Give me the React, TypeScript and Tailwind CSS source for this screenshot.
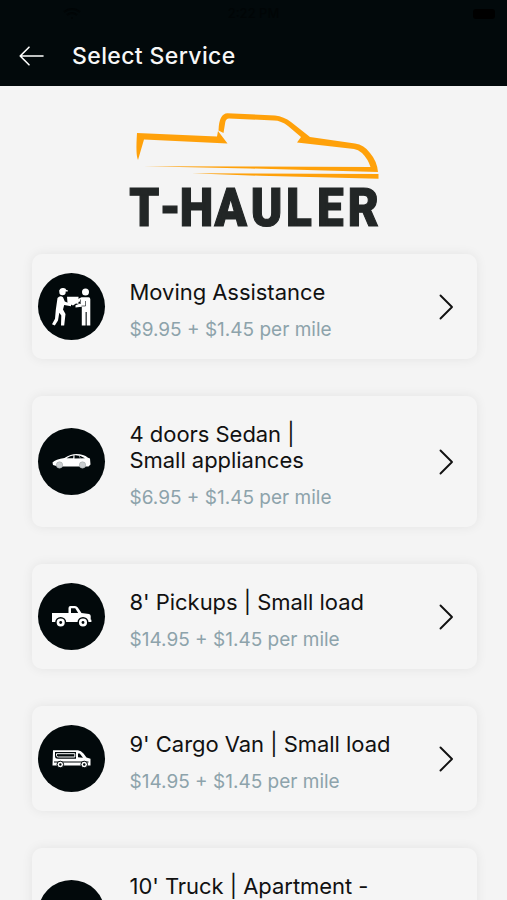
import type { ReactNode } from 'react';

type Service = {
  title: string[];
  price: string;
  icon?: ReactNode;
};

const SERVICES: Service[] = [
  { title: ['Moving Assistance'], price: '$9.95 + $1.45 per mile', icon: <MoversIcon /> },
  { title: ['4 doors Sedan |', 'Small appliances'], price: '$6.95 + $1.45 per mile', icon: <SedanIcon /> },
  { title: ["8' Pickups | Small load"], price: '$14.95 + $1.45 per mile', icon: <PickupIcon /> },
  { title: ["9' Cargo Van | Small load"], price: '$14.95 + $1.45 per mile', icon: <VanIcon /> },
  { title: ["10' Truck | Apartment -", '\u00a0'], price: '' },
];

export default function App() {
  return (
    <div className="h-[900px] w-[507px] overflow-hidden bg-[#f4f4f4] font-['Inter',sans-serif] flex flex-col">
      <Header />
      <main className="flex flex-1 flex-col overflow-hidden">
        <Logo />
        <ul className="ml-8 flex w-[445px] flex-col gap-[37px]">
          {SERVICES.map((s) => (
            <ServiceCard key={s.title[0]} service={s} />
          ))}
        </ul>
      </main>
    </div>
  );
}

function Header() {
  return (
    <header className="h-[86px] shrink-0 bg-[#02090b]">
      {/* status bar: black on near black */}
      <div className="flex h-[27px] items-center justify-between px-3 text-[13px] text-[#010506]">
        <svg width="80" height="14" viewBox="0 0 80 14" fill="none" stroke="currentColor" strokeWidth="2">
          <path d="M52 5q8-6 16 0M55 8q5-4 10 0M59 11h2" />
        </svg>
        <span className="font-medium">2:22 PM</span>
        <div className="flex w-20 justify-end">
          <div className="h-[10px] w-[22px] rounded-[3px] bg-black" />
        </div>
      </div>
      <div className="flex h-[58px] items-center pl-[19px]">
        <svg width="26" height="20" viewBox="0 0 26 20" fill="none" stroke="#fff" strokeWidth="1.6" strokeLinecap="round" strokeLinejoin="round">
          <path d="M24 10H1.2M10 1.2 1.2 10l8.800 8.800" />
        </svg>
        <h1 className="ml-[27px] text-[23px] font-medium tracking-[0.38px] text-[#f7f7f7]">Select Service</h1>
      </div>
    </header>
  );
}

function Logo() {
  return (
    <svg className="ml-[120px] mt-[14px] mb-[14px] shrink-0" width="270" height="140" viewBox="0 0 270 140">
      <g fill="#ffa10a">
        <path d="M17 33 97 36.5 98 31 107.5 43.5 24 39.5 18 60Q15.5 55 17 33Z" />
        <path d="M98.5 30.5Q99 13.5 107.5 13.3L155 15.5Q164 16.5 171 22L190 37 235 43.5Q244 44.5 250 53 257 61 258 72L130 68.5 24 66.3 130 66.5 250.500 67Q248 59 242 53 238 49.500 234 49L177 42.500 181 37 168 26Q161 20.500 154 20.500L109 18.500Q106 18.500 105.300 22L103.500 33Z" />
        <path d="M72 73.300 258.500 74V78.700L140 75.800Z" />
      </g>
      {/* narrow glyphs with wide gaps, one x per letter */}
      <text
        transform="scale(0.89 1)"
        x="10.300 44.500 67 106.300 147 186.500 221.500 256"
        y="126.500"
        fill="#222626"
        stroke="#222626"
        strokeWidth="1.200"
        fontFamily="Roboto, sans-serif"
        fontWeight="900"
        fontSize="53.500"
      >
        T-HAULER
      </text>
    </svg>
  );
}

function ServiceCard({ service }: { service: Service }) {
  return (
    <li className="flex items-center rounded-[10px] bg-[#f5f5f5] pt-[25px] pb-[18px] pl-1.5 shadow-[0_0_12px_rgba(0,0,0,0.07)]">
      <div className="-mt-[7px] h-[67px] w-[67px] shrink-0 rounded-full bg-[#02090b]">{service.icon}</div>
      <div className="ml-[24.500px] flex-1">
        <h2 className="text-[22px] leading-[26px] tracking-[-0.04px] text-[#111]">
          {service.title.map((line) => (
            <span key={line} className="block whitespace-nowrap">{line}</span>
          ))}
        </h2>
        <p className="mt-[13px] h-[23px] text-[19px] leading-[23px] text-[#8da3ab]">{service.price}</p>
      </div>
      <svg className="-mt-[7px] mr-[23.500px]" width="16" height="26" viewBox="0 0 16 26" fill="none" stroke="#111" strokeWidth="1.900" strokeLinecap="round" strokeLinejoin="round">
        <path d="M2.500 1.500 14 13 2.500 24.500" />
      </svg>
    </li>
  );
}

function MoversIcon() {
  return (
    <svg width="67" height="67" viewBox="0 0 67 67" fill="#fff">
      <circle cx="24.500" cy="19" r="3.200" />
      <path d="M21.300 18q.5-3.200 4-3 2.500.2 3 2l1.500.3v1.200h-8.500z" />
      <path d="M19.500 25q2.500-2.800 5.500-.8l1.800 4.300 6.200 2.500v2.200l-6.800-1.200-1.200 4.500 2.500 4.500-1.300 11.500h-3.200l.3-10-2-2.800-1.300 7.800-3.200 5-2.800-1.200 3-5.500.8-9Z" />
      <path d="M29 23.700h11.500v7.300l-2.500-.5-3 2-5.500-2.500z" />
      <circle cx="47.500" cy="19" r="3.500" />
      <path d="M43.500 24.200h7.200q1.600 0 1.600 2V52.500h-3.600V39h-1.100v13.500h-3.800V33.800l-6.300.6v-2.200l4.500-1.800v-2l-3 .8v-2.800z" />
      <path d="M42.500 26.500v4.500M47.500 28v5h-4" fill="none" stroke="#02090b" strokeWidth=".6" />
    </svg>
  );
}

function SedanIcon() {
  return (
    <svg width="67" height="67" viewBox="0 0 67 67">
      <path fill="#fff" d="M14.500 34.500q3-3.500 12-4.500 6-4 12-4 7 0 11.500 3.700l2 .8.500 6-2 1.900H20l-5-1.500Z" />
      <path fill="#02090b" d="M28.500 30.300q4-2.500 7-2.800l-.3 2.800zM36.500 27.300q6-.3 10.500 3l-10.500.1z" />
      <path stroke="#c5cacc" strokeWidth=".7" d="M41 27.500l1.500 3" />
      <g fill="#c9cdcf" stroke="#999fa1" strokeWidth=".5">
        <circle cx="21.500" cy="37" r="3.200" />
        <circle cx="44.500" cy="37" r="3.200" />
      </g>
    </svg>
  );
}

function PickupIcon() {
  return (
    <svg width="67" height="67" viewBox="0 0 67 67">
      <path fill="#fff" d="M14 30H30.500V25q0-2 2-2h4.500q1.800 0 2.800 1.500l3.700 5.500 7.500 1q1.700.3 1.700 2v3.500l.7.300v2.200H14z" />
      <path fill="#02090b" d="M33 25.200h4.200l3 4.800h-7.200z" />
      <g fill="#fff" stroke="#02090b" strokeWidth="1.500">
        <circle cx="22.700" cy="39.500" r="4.800" />
        <circle cx="45" cy="39.500" r="4.800" />
      </g>
      <circle cx="22.700" cy="39.500" r="1.400" fill="#02090b" />
      <circle cx="45" cy="39.500" r="1.400" fill="#02090b" />
    </svg>
  );
}

function VanIcon() {
  return (
    <svg width="67" height="67" viewBox="0 0 67 67">
      <path fill="#fff" d="M15 25.300h25q3 .2 5.500 3.200l3 4 4 1.200v6.800H14.500z" />
      <path fill="#02090b" d="M17 27h21v6.800H20q-3 0-3-2.500zM40 28.500h1.700l3.300 4.300-5-.6zM16 36.500h34.500v.9H16z" />
      <path fill="none" stroke="#fff" strokeWidth="1" d="M18.500 28.700h18.300v3.300H20.500q-2 0-2-1.300z" />
      <g fill="#fff" stroke="#02090b" strokeWidth="1">
        <circle cx="22.300" cy="39.500" r="3.300" />
        <circle cx="46.200" cy="39.500" r="3.300" />
      </g>
      <circle cx="22.300" cy="39.500" r="1.200" fill="#02090b" />
      <circle cx="46.200" cy="39.500" r="1.200" fill="#02090b" />
    </svg>
  );
}
